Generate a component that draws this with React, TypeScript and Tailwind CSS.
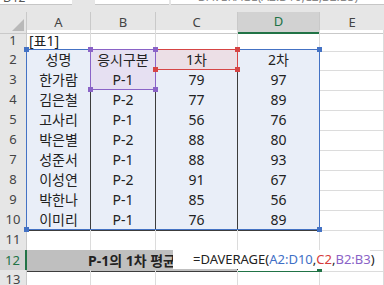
import React from "react";

const rowsData: [string, string, string, string][] = [
  ["한가람", "P-1", "79", "97"],
  ["김은철", "P-2", "77", "89"],
  ["고사리", "P-1", "56", "76"],
  ["박은별", "P-2", "88", "80"],
  ["성준서", "P-1", "88", "93"],
  ["이성연", "P-2", "91", "67"],
  ["박한나", "P-1", "85", "56"],
  ["이미리", "P-1", "76", "89"],
];

const grid = "grid grid-cols-[27px_64px_65px_82px_82px_1fr] h-[20px]";
const rowHdr =
  "flex items-center justify-center bg-[#e6e6e6] border-r border-b border-[#c9c9c9] text-[13px] text-[#444]";
const gcell = "border-r border-b border-[#dcdcdc]";
const tcell =
  "flex items-center justify-center border-r border-b border-[#3c3c3c] text-[14px] text-[#222] leading-none";

function Handle({ x, y, color }: { x: number; y: number; color: string }) {
  return (
    <div
      className="absolute w-[5px] h-[5px]"
      style={{ left: x - 2, top: y - 2, background: color }}
    />
  );
}

export default function App() {
  return (
    <div className="relative w-[384px] h-[285px] overflow-hidden bg-white font-['Noto_Sans','Noto_Sans_CJK_KR',sans-serif]">
      {/* formula bar strip */}
      <div className="flex h-[6px] bg-[#e6e6e6]">
        <div className="w-[72px] h-[5px] bg-white border-b border-[#c6c6c6] overflow-hidden relative">
          <span className="absolute left-[3px] top-[-11px] text-[12px] text-[#555]">D12</span>
        </div>
        <div className="w-[23px]" />
        <div className="w-[74px] h-[5px] bg-white border-b border-[#c6c6c6]" />
        <div className="w-[2px]" />
        <div className="flex-1 h-[5px] bg-white border-b border-[#c6c6c6] overflow-hidden relative">
          <span className="absolute left-[20px] top-[-12px] text-[12px] text-[#888] whitespace-nowrap">
            =DAVERAGE(A2:D10,C2,B2:B3)
          </span>
        </div>
      </div>
      <div className="h-[6px] bg-[#e6e6e6]" />
      {/* column header */}
      <div className="grid grid-cols-[27px_64px_65px_82px_82px_1fr] h-[18px] bg-[#e6e6e6] text-[13px] text-[#444]">
        <div className="relative border-r border-b border-[#c9c9c9]">
          <svg className="absolute right-[2px] bottom-[2px]" width="12" height="12" viewBox="0 0 12 12">
            <polygon points="12,0 12,12 0,12" fill="#b9b9b9" />
          </svg>
        </div>
        <div className="flex items-center justify-center border-r border-b border-[#c9c9c9]">A</div>
        <div className="flex items-center justify-center border-r border-b border-[#c9c9c9]">B</div>
        <div className="flex items-center justify-center border-r border-b border-[#c9c9c9]">C</div>
        <div className="flex items-center justify-center border-r border-[#c9c9c9] bg-[#d2d2d2] border-b-2 border-b-[#217346] text-[#217346]">D</div>
        <div className="flex items-center justify-center border-b border-[#c9c9c9]">E</div>
      </div>
      {/* row 1 */}
      <div className={grid}>
        <div className={rowHdr}>1</div>
        <div className={`${gcell} flex items-center text-[14px] text-[#222] pl-[2px] overflow-visible whitespace-nowrap`}>[표1]</div>
        <div className={gcell} />
        <div className={gcell} />
        <div className={gcell} />
        <div className={gcell} />
      </div>
      {/* row 2 */}
      <div className={grid}>
        <div className={rowHdr}>2</div>
        <div className={`${tcell} bg-[#e9eef8]`}>성명</div>
        <div className={`${tcell} bg-[#e6e0f2]`}>응시구분</div>
        <div className={`${tcell} bg-[#ecdfe6]`}>1차</div>
        <div className={`${tcell} bg-[#e9eef8]`}>2차</div>
        <div className={gcell} />
      </div>
      {rowsData.map((r, i) => (
        <div className={grid} key={i}>
          <div className={rowHdr}>{i + 3}</div>
          <div className={`${tcell} bg-[#e9eef8]`}>{r[0]}</div>
          <div className={`${tcell} ${i === 0 ? "bg-[#e6e0f2]" : "bg-[#e9eef8]"}`}>{r[1]}</div>
          <div className={`${tcell} bg-[#e9eef8]`}>{r[2]}</div>
          <div className={`${tcell} bg-[#e9eef8]`}>{r[3]}</div>
          <div className={gcell} />
        </div>
      ))}
      {/* row 11 */}
      <div className={grid}>
        <div className={rowHdr}>11</div>
        <div className="border-r border-[#dcdcdc] border-b border-b-[#3c3c3c]" />
        <div className="border-r border-[#dcdcdc] border-b border-b-[#3c3c3c]" />
        <div className="border-r border-[#dcdcdc] border-b border-b-[#3c3c3c]" />
        <div className="border-r border-[#dcdcdc] border-b border-b-[#217346]" />
        <div className={gcell} />
      </div>
      {/* row 12 */}
      <div className={grid}>
        <div className="flex items-center justify-center bg-[#d2d2d2] border-b border-[#c9c9c9] border-r-2 border-r-[#217346] text-[13px] text-[#217346]">12</div>
        <div className="col-span-3 flex items-center justify-center bg-[#bfbfbf] border-r border-b border-[#3c3c3c] text-[14px] font-bold text-[#222] whitespace-nowrap">
          P-1의 1차 평균
        </div>
        <div className="border-r border-[#dcdcdc] border-b border-b-[#217346]" />
        <div className={gcell} />
      </div>
      {/* row 13 */}
      <div className={grid}>
        <div className={rowHdr}>13</div>
        <div className={gcell} />
        <div className={gcell} />
        <div className={gcell} />
        <div className={gcell} />
        <div className={gcell} />
      </div>

      {/* range highlights */}
      <div className="absolute left-[26px] top-[49px] w-[294px] h-[181px] border border-[#4472c4] pointer-events-none" />
      <div className="absolute left-[155px] top-[49px] w-[83px] h-[21px] border border-[#d64545] pointer-events-none" />
      <div className="absolute left-[90px] top-[49px] w-[66px] h-[41px] border border-[#8a63c7] pointer-events-none" />
      <Handle x={26} y={49} color="#4472c4" />
      <Handle x={319} y={49} color="#4472c4" />
      <Handle x={26} y={229} color="#4472c4" />
      <Handle x={319} y={229} color="#4472c4" />
      <Handle x={155} y={69} color="#d64545" />
      <Handle x={237} y={49} color="#d64545" />
      <Handle x={237} y={69} color="#d64545" />
      <Handle x={90} y={49} color="#8a63c7" />
      <Handle x={155} y={49} color="#8a63c7" />
      <Handle x={90} y={89} color="#8a63c7" />
      <Handle x={155} y={89} color="#8a63c7" />
      <Handle x={319} y={269} color="#217346" />

      {/* in-cell editor */}
      <div className="absolute left-[173px] top-[250px] w-[197px] h-[19px] bg-white flex items-center pl-[20px] text-[13px] text-[#222] whitespace-nowrap leading-none">
        <span>=DAVERAGE(</span>
        <span className="text-[#3f6fc6]">A2:D10</span>
        <span>,</span>
        <span className="text-[#d63b3b]">C2</span>
        <span>,</span>
        <span className="text-[#8a63c7]">B2:B3</span>
        <span>)</span>
        <span className="ml-[1px] w-[1px] h-[16px] bg-black" />
      </div>
    </div>
  );
}
